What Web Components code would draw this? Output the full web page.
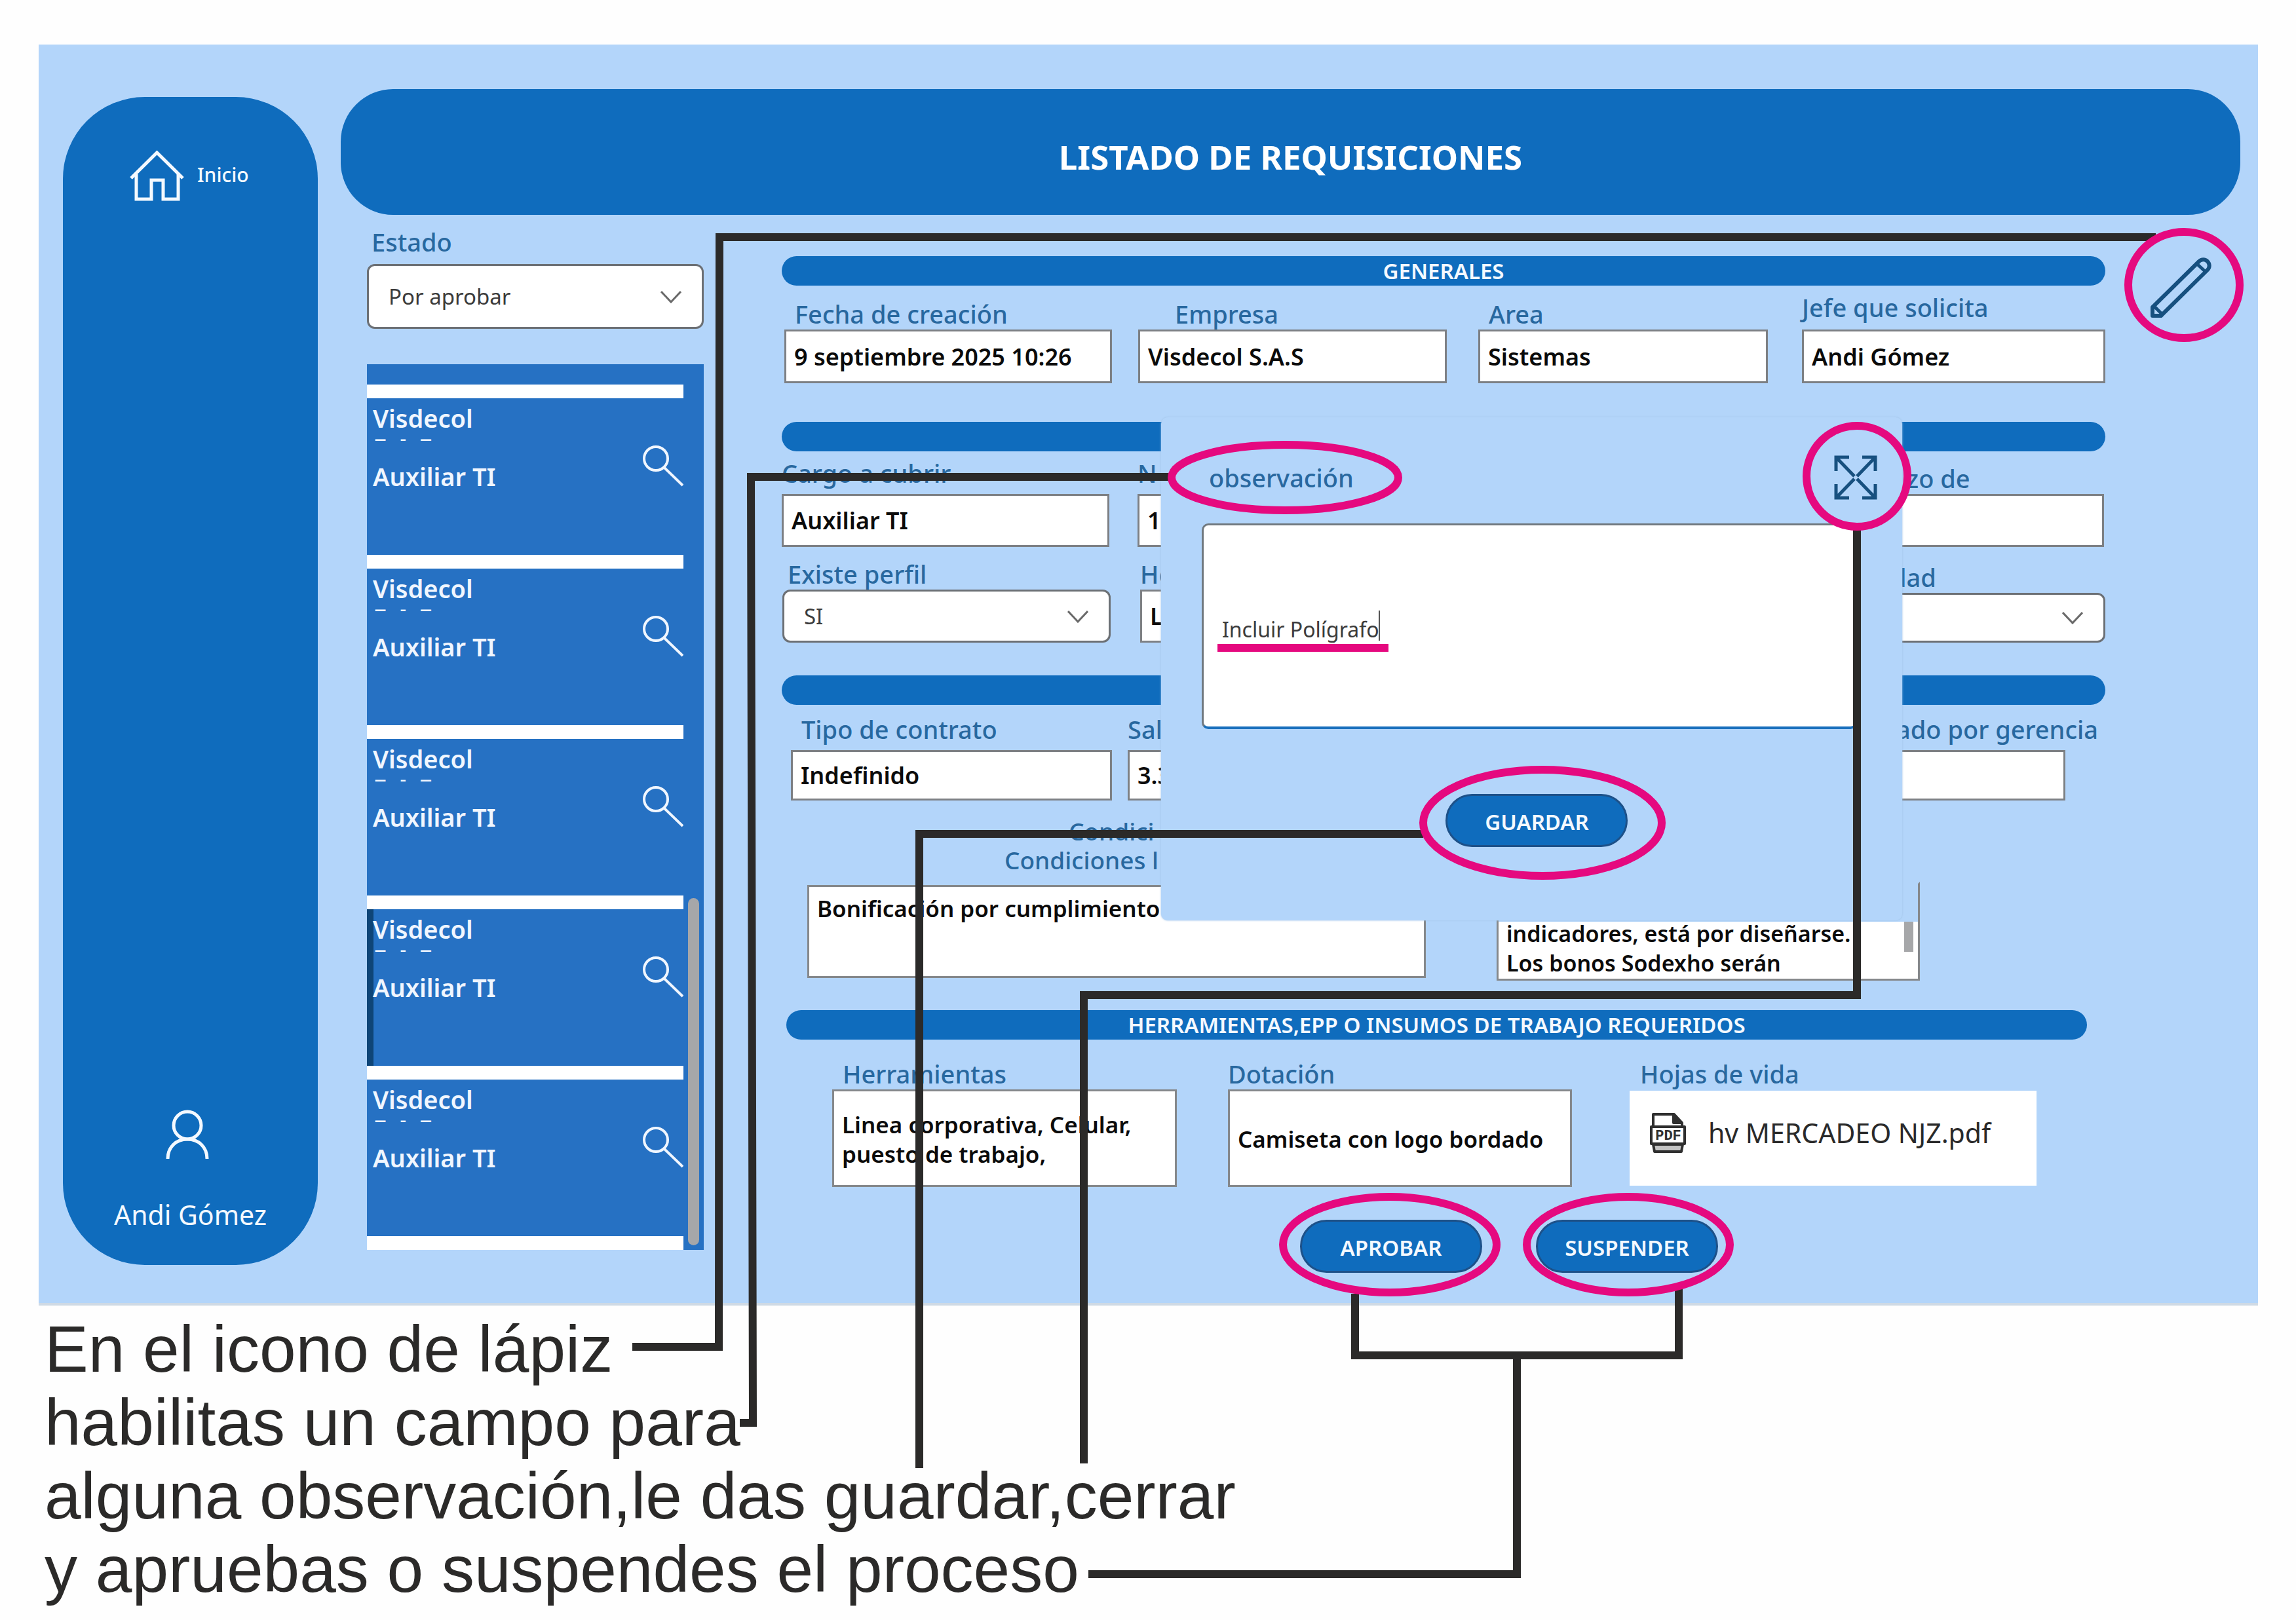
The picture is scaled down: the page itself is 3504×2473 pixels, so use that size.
<!DOCTYPE html>
<html lang="es">
<head>
<meta charset="utf-8">
<title>Listado de requisiciones</title>
<style>
  body { margin: 0; background: #fefefe; }
</style>
</head>
<body>
<guide-page></guide-page>

<script>
const BASE = `
  * { box-sizing: border-box; }
  a { color: inherit; text-decoration: none; }
  button, input, select, textarea { font: inherit; color: inherit; margin: 0; border-radius: 0; }
  button { background: none; border: 0; padding: 0; cursor: pointer; }
  svg { display: block; }
`;

let uid = 0;

function define(name, render) {
  customElements.define(name, class extends HTMLElement {
    constructor() {
      super();
      this.attachShadow({ mode: 'open' });
    }
    connectedCallback() {
      if (!this.shadowRoot.childNodes.length) {
        this.shadowRoot.innerHTML = '<style>' + BASE + '</style>' + render(this, 'f' + (++uid));
      }
    }
  });
}

/* Vertical navigation with the home link and the current user */
define('side-nav', () => `
  <style>
    :host { display: flex; flex-direction: column; justify-content: space-between; background: #0f6cbd; color: #f4f9ff; border-radius: 125px; padding: 81px 0 49px; }
    .home { display: flex; align-items: center; gap: 20px; padding-left: 102px; font-size: 30px; line-height: 44px; font-weight: 500; }
    .home span { padding-bottom: 4px; }
    .user { display: flex; flex-direction: column; align-items: center; gap: 56px; font-size: 41px; line-height: 56px; }
  </style>
  <a class="home" href="#inicio">
    <svg width="83" height="80" viewBox="0 0 83 80" fill="none" stroke="currentColor" stroke-width="5"><path d="M2 43 41.500 4 81 43"/><path d="M10 37V75H33V46H51V75H74V37"/></svg>
    <span>Inicio</span>
  </a>
  <div class="user">
    <svg width="76" height="76" viewBox="0 0 76 76" fill="none" stroke="currentColor" stroke-width="5"><circle cx="33" cy="24" r="21"/><path d="M3 75C3 57 16 45 33 45S63 57 63 75"/></svg>
    <span>Andi Gómez</span>
  </div>
`);

define('page-header', () => `
  <style>
    :host { display: flex; align-items: center; justify-content: center; height: 192px; padding: 14px 0 0; border-radius: 80px; background: #0f6cbd; color: #fff; }
    h1 { margin: 0; font-size: 51px; line-height: 64px; font-weight: 700; }
  </style>
  <h1><slot></slot></h1>
`);

define('section-bar', () => `
  <style>
    :host { display: flex; align-items: center; justify-content: center; height: 45px; border-radius: 23px; background: #0f6cbd; color: #f4f9ff; }
    h2 { margin: 0; font-size: 33px; line-height: 40px; font-weight: 600; }
  </style>
  <h2><slot></slot></h2>
`);

/* Row of fields; --cols lists the outer margin, then field and gap tracks in turn */
define('field-row', () => `
  <style>
    :host { display: grid; grid-template-columns: var(--cols); align-items: end; }
    ::slotted(*) { min-width: 0; }
    ::slotted(:nth-child(1)) { grid-column: 2; }
    ::slotted(:nth-child(2)) { grid-column: 4; }
    ::slotted(:nth-child(3)) { grid-column: 6; }
    ::slotted(:nth-child(4)) { grid-column: 8; }
  </style>
  <slot></slot>
`);

const FIELD = `
  :host { display: flex; flex-direction: column; min-width: 0; }
  label, .label { font-size: 38px; line-height: 48px; font-weight: 500; color: #28689f; white-space: nowrap; padding-left: var(--indent, 16px); margin-bottom: var(--drop, 0px); }
`;

define('text-field', (el, id) => `
  <style>${FIELD}
    input { width: 100%; height: var(--box, 82px); border: 3px solid #7d8084; background: #fff; padding: 0 12px; font-weight: 600; font-size: 36px; color: #0b0b0b; }
  </style>
  <label for="${id}">${el.getAttribute('label')}</label>
  <input id="${id}" type="text" value="${el.getAttribute('value') || ''}">
`);

define('area-field', (el, id) => `
  <style>${FIELD}
    textarea { display: block; width: 100%; height: var(--box, 149px); border: 3px solid #85888b; background: #fff; padding: var(--top, 10px) 12px 0; font-weight: 600; font-size: var(--size, 35px); line-height: 45px; color: #0b0b0b; resize: none; overflow: hidden; }
    :host([scrolled]) textarea { border-top-color: #b3d5fa; background: linear-gradient(#a6a7a9 0 0) no-repeat right 7px top 58px / 14px 46px, linear-gradient(#b3d5fa 58px, #fff 0); }
  </style>
  ${el.hasAttribute('label') ? `<label for="${id}">${el.getAttribute('label')}</label>` : ''}
  <textarea id="${id}" ${el.hasAttribute('name') ? `aria-label="${el.getAttribute('name')}"` : ''}>${el.getAttribute('value')}</textarea>
`);

define('choice-field', (el, id) => `
  <style>${FIELD}
    .box { display: grid; align-items: center; }
    select, svg { grid-area: 1 / 1; }
    select { appearance: none; width: 100%; height: var(--box, 81px); border: 3px solid #6c7075; border-radius: 12px; background: #fff; padding: 0 30px; font-size: 33px; color: #3b3b3b; }
    svg { justify-self: end; margin-right: 34px; pointer-events: none; }
  </style>
  <label for="${id}">${el.getAttribute('label')}</label>
  <div class="box">
    <select id="${id}"><option>${el.getAttribute('value') || ''}</option></select>
    <svg width="32" height="20" viewBox="0 0 32 20" fill="none" stroke="#6a6a6a" stroke-width="3"><path d="M1 2 16 18 31 2"/></svg>
  </div>
`);

define('file-field', () => `
  <style>${FIELD}
    a { display: flex; align-items: center; gap: 32px; height: 145px; margin: 2px 0; padding: 0 30px 18px; background: #fff; color: #2a2a2a; font-size: 41px; line-height: 56px; white-space: nowrap; }
    text { font-family: "Liberation Mono", monospace; font-weight: 700; }
  </style>
  <span class="label">Hojas de vida</span>
  <a href="#hoja-de-vida">
    <svg width="58" height="62" viewBox="0 0 58 62" fill="none" stroke="#2f2f2f" stroke-width="4" stroke-linejoin="round">
      <path d="M6 22V3H38L50 16V22"/><path d="M37 4V16H49Z" fill="#2f2f2f"/>
      <path d="M3 22H54V48H3Z" fill="#fff"/><path d="M6 49H51L49 60H8Z" fill="#c4c4c4"/>
      <text x="29" y="42" text-anchor="middle" font-size="22" fill="#2f2f2f" stroke="none">PDF</text>
    </svg>
    <span>hv MERCADEO NJZ.pdf</span>
  </a>
`);

define('pill-button', () => `
  <style>
    :host { display: block; }
    button { width: 278px; height: 81px; border: 3px solid #1d5189; border-radius: 41px; background: #0f6cbd; color: #f4f9ff; padding-top: 4px; font-size: 33px; font-weight: 600; }
  </style>
  <button type="button"><slot></slot></button>
`);

define('request-card', el => `
  <style>
    :host { display: block; height: 260px; border-top: 21px solid #fff; }
    article { display: flex; height: 100%; color: #f0f6ff; }
    article.on { box-shadow: inset 10px 0 #0e4577; }
    .text { flex: 1; padding: 7px 0 0 9px; font-size: 38px; line-height: 46px; font-weight: 600; }
    p { margin: 0; }
    .more { display: flex; gap: 22px; margin-bottom: 23px; padding-left: 3px; font-size: 17px; line-height: 20px; font-weight: 900; }
    button { align-self: flex-start; margin-top: 71px; }
  </style>
  <article class="${el.hasAttribute('selected') ? 'on' : ''}">
    <div class="text"><p>Visdecol</p><p class="more"><span>—</span><span>–</span><span>—</span></p><p>Auxiliar TI</p></div>
    <button type="button" aria-label="Ver requisición">
      <svg width="62" height="64" viewBox="0 0 62 64" fill="none" stroke="currentColor" stroke-width="4"><circle cx="20" cy="21" r="18"/><path d="M33 35 61 62"/></svg>
    </button>
  </article>
`);

define('request-list', () => `
  <style>
    :host { display: flex; height: 1352px; overflow: hidden; background: #2671c3; }
    .cards { flex: 1; padding-top: 31px; }
    .end { height: 21px; background: #fff; }
    .track { display: flex; align-items: flex-end; width: 31px; padding: 7px; }
    .thumb { width: 17px; height: 530px; border-radius: 9px; background: #a6a7a9; }
  </style>
  <div class="cards"><slot></slot><div class="end"></div></div>
  <div class="track"><div class="thumb"></div></div>
`);

/* Floating box in which the observation is written */
define('observation-dialog', () => `
  <style>
    :host { display: flex; flex-direction: column; height: 768px; border-radius: 10px; background: #b3d5fa; box-shadow: 0 0 3px #9fc0e4; }
    header { display: flex; align-items: center; justify-content: space-between; padding: 58px 38px 0 73px; }
    label { font-size: 38px; line-height: 48px; font-weight: 500; color: #28689f; }
    header button { color: #17507f; }
    textarea { display: block; height: 314px; margin: 36px 69px 99px 62px; padding: 136px 28px 0; border: 3px solid #71797f; border-bottom: 4px solid #1a70bd; border-radius: 10px; background: #fff; color: #3b3b3b; font-size: 32px; line-height: 46px; resize: none; overflow: hidden; }
    pill-button { align-self: center; padding-left: 16px; }
  </style>
  <header>
    <label for="obs">observación</label>
    <button type="button" aria-label="Cerrar">
      <svg width="66" height="68" viewBox="0 0 66 68" fill="none" stroke="currentColor" stroke-width="5"><path d="M3 24V3H23M43 3H63V24M63 44V65H43M23 65H3V44M3 3 31 32M63 3 35 32M63 65 35 36M3 65 31 36"/></svg>
    </button>
  </header>
  <textarea id="obs">Incluir Polígrafo</textarea>
  <pill-button>GUARDAR</pill-button>
`);

define('request-form', () => `
  <style>
    :host { display: flex; flex-direction: column; }
    .r1 { --cols: 4fr 500fr 40fr 471fr 48fr 442fr 52fr 463fr; margin-top: 9px; margin-bottom: 59px; }
    .r2 { --cols: 0fr 500fr 43fr 472fr 542fr 461fr 2fr; --drop: 8px; --box: 81px; margin-top: 9px; }
    .r3 { --cols: 1fr 501fr 45fr 472fr 538fr 463fr 0fr; --box: 81px; margin-top: 17px; margin-bottom: 50px; }
    .r4 { --cols: 14fr 490fr 24fr 471fr 498fr 462fr 61fr; --drop: 8px; --box: 77px; margin-top: 13px; }
    .conditions { margin: 25px 0 11px; padding-left: 340px; font-size: 37px; line-height: 44px; font-weight: 500; color: #28689f; }
    .conditions p { margin: 0; }
    .conditions p:first-child { padding-left: 98px; }
    .r5 { --cols: 39fr 944fr 108fr 646fr 283fr; align-items: center; margin-bottom: 45px; }
    .tools { margin: 0 28px 0 7px; }
    .r6 { --cols: 77fr 526fr 78fr 525fr 88fr 621fr 105fr; margin-top: 28px; margin-bottom: 50px; }
    .actions { display: flex; justify-content: center; gap: 82px; padding-left: 200px; }
    .none { --indent: 0px; }
    .deep { --indent: 56px; }
    .lift { --drop: 10px; }
    .level { --drop: 0px; }
  </style>
  <section-bar>GENERALES</section-bar>
  <field-row class="r1">
    <text-field label="Fecha de creación" value="9 septiembre 2025 10:26"></text-field>
    <text-field class="deep" label="Empresa" value="Visdecol S.A.S"></text-field>
    <text-field label="Area" value="Sistemas"></text-field>
    <text-field class="none lift" label="Jefe que solicita" value="Andi Gómez"></text-field>
  </field-row>
  <section-bar></section-bar>
  <field-row class="r2">
    <text-field class="none" label="Cargo a cubrir" value="Auxiliar TI"></text-field>
    <text-field class="none" label="N" value="1"></text-field>
    <text-field class="level" style="--indent: 160px" label="zo de"></text-field>
  </field-row>
  <field-row class="r3">
    <choice-field style="--indent: 8px" label="Existe perfil" value="SI"></choice-field>
    <text-field class="none" label="He" value="L"></text-field>
    <choice-field style="--indent: 136px; --box: 76px" label="dad"></choice-field>
  </field-row>
  <section-bar></section-bar>
  <field-row class="r4">
    <text-field label="Tipo de contrato" value="Indefinido"></text-field>
    <text-field class="none" label="Sal" value="3.3"></text-field>
    <text-field style="--indent: 204px" label="ado por gerencia"></text-field>
  </field-row>
  <div class="conditions"><p>Condici</p><p>Condiciones l</p></div>
  <field-row class="r5">
    <area-field name="Condiciones" style="--box: 142px" value="Bonificación por cumplimiento"></area-field>
    <area-field scrolled name="Observaciones del salario" style="--box: 151px; --size: 34px; --top: 54px" value="indicadores, está por diseñarse.&#10;Los bonos Sodexho serán"></area-field>
  </field-row>
  <section-bar class="tools">HERRAMIENTAS,EPP O INSUMOS DE TRABAJO REQUERIDOS</section-bar>
  <field-row class="r6">
    <area-field label="Herramientas" style="--top: 28px" value="Linea corporativa, Celular,&#10;puesto de trabajo,"></area-field>
    <area-field class="none" label="Dotación" style="--top: 50px" value="Camiseta con logo bordado"></area-field>
    <file-field></file-field>
  </field-row>
  <div class="actions"><pill-button>APROBAR</pill-button><pill-button>SUSPENDER</pill-button></div>
`);

define('app-panel', () => `
  <style>
    :host { position: relative; display: flex; gap: 35px; padding: 68px 27px 0 37px; background: #b3d5fa; border-bottom: 4px solid #cfdae5; }
    side-nav { flex: 0 0 389px; margin: 12px 0 58px; }
    main { flex: 1; min-width: 0; padding-bottom: 46px; }
    .body { display: flex; align-items: flex-start; }
    .left { flex: 0 0 514px; margin: 17px 119px 0 40px; }
    .left choice-field { --indent: 7px; --drop: 10px; --box: 99px; margin-bottom: 54px; }
    request-form { flex: 1; min-width: 0; margin-top: 63px; }
    .edit { flex: 0 0 206px; padding: 64px 0 0 65px; color: #17507f; }
    observation-dialog { position: absolute; top: 569px; left: 50.575%; width: 33.393%; }
  </style>
  <side-nav></side-nav>
  <main>
    <page-header>LISTADO DE REQUISICIONES</page-header>
    <div class="body">
      <div class="left">
        <choice-field label="Estado" value="Por aprobar"></choice-field>
        <request-list>
          <request-card></request-card><request-card></request-card><request-card></request-card><request-card selected></request-card><request-card></request-card>
        </request-list>
      </div>
      <request-form></request-form>
      <div class="edit">
        <button type="button" aria-label="Editar">
          <svg width="98" height="96" viewBox="0 0 98 96" fill="none" stroke="currentColor" stroke-width="6" stroke-linejoin="round"><path d="M78 7A9 9 0 0 1 91 20L20 90H7V77Z"/><path d="M75 11 87 22M9 75 22 88" stroke-width="5"/></svg>
        </button>
      </div>
    </div>
  </main>
  <observation-dialog></observation-dialog>
`);

/* Callout lines and rings drawn over the panel */
define('callout-layer', () => `
  <style>
    :host { position: absolute; top: 0; left: 0; width: 100%; pointer-events: none; }
    svg { width: 100%; height: auto; }
  </style>
  <svg viewBox="0 0 3504 2473" fill="none">
    <g stroke="#2b2a29" stroke-width="12">
      <path d="M965 2056H1097L1098 362H3290"/>
      <path d="M1129 2172H1149L1146 728H1788"/>
      <path d="M1403 2241V1273H2172"/>
      <path d="M1654 2234V1519H2834V808"/>
      <path d="M2068 1975V2069H2562V1965"/>
      <path d="M2315 2069V2403H1661"/>
    </g>
    <path d="M2105 932V978" stroke="#555" stroke-width="2"/>
    <g stroke="#e5097f" stroke-width="12">
      <path d="M1858 989H2119"/>
      <ellipse cx="3333" cy="435" rx="85" ry="81"/>
      <ellipse cx="2834" cy="727" rx="77" ry="77"/>
      <ellipse cx="1961" cy="729" rx="173" ry="50"/>
      <ellipse cx="2354" cy="1256" rx="182" ry="81"/>
      <ellipse cx="2121" cy="1900" rx="163" ry="73"/>
      <ellipse cx="2485" cy="1900" rx="155" ry="73"/>
    </g>
  </svg>
`);

define('guide-caption', () => `
  <style>
    :host { display: block; padding: 10px 68px 0; color: #2b2a29; font: 100px/112px "Liberation Sans", Arial, sans-serif; }
    p { margin: 0; white-space: nowrap; }
  </style>
  <p>En el icono de lápiz<br>habilitas un campo para<br>alguna observación,le das guardar,cerrar<br>y apruebas o suspendes el proceso</p>
`);

define('guide-page', () => `
  <style>
    :host { display: block; position: relative; padding: 68px 0 24px; font-family: "Noto Sans", "Open Sans", sans-serif; }
    app-panel { margin: 0 58px 0 59px; }
  </style>
  <app-panel></app-panel>
  <guide-caption></guide-caption>
  <callout-layer></callout-layer>
`);
</script>
</body>
</html>
